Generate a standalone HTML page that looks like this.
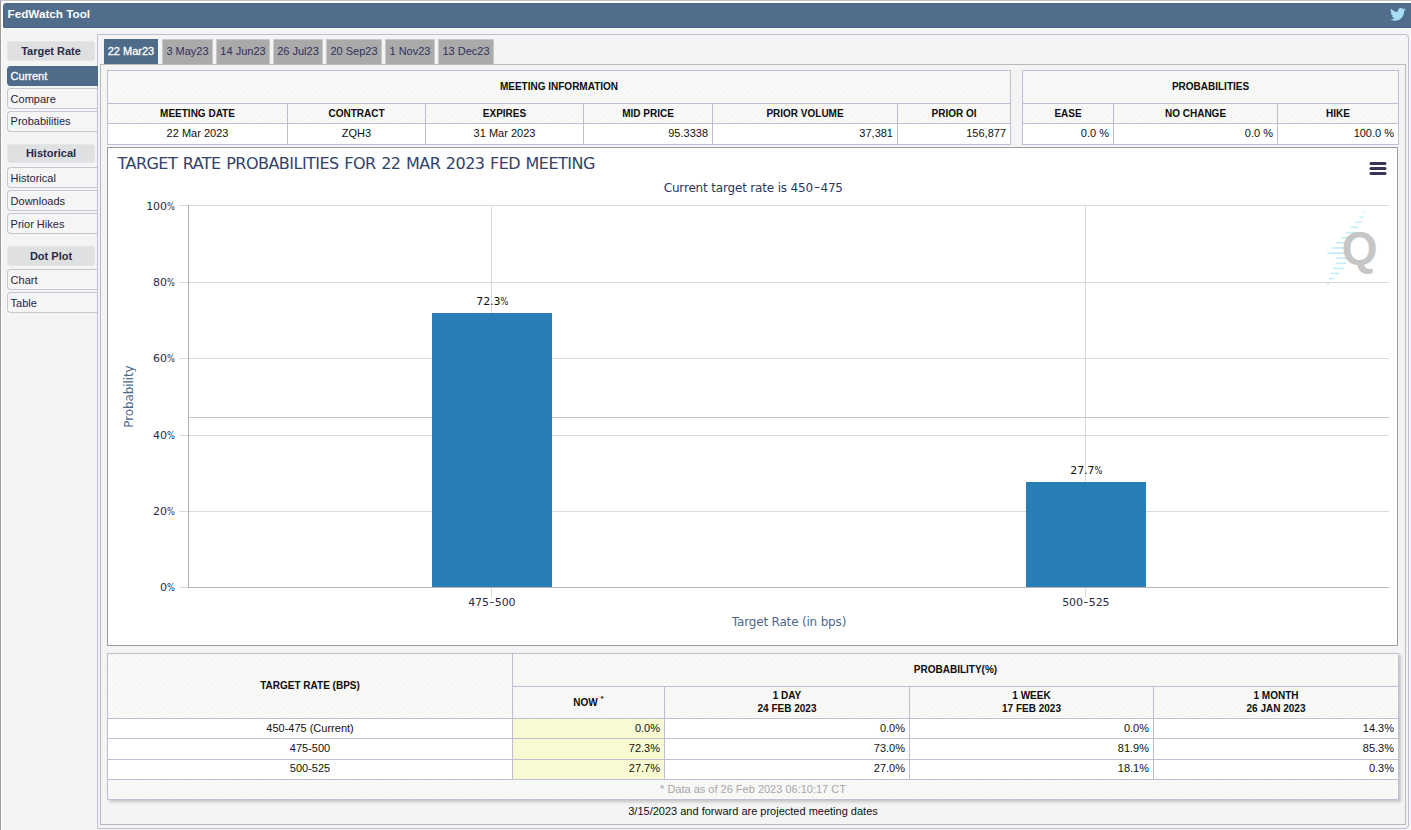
<!DOCTYPE html>
<html lang="en">
<head>
<meta charset="utf-8">
<title>FedWatch Tool</title>
<style>
*{box-sizing:border-box;margin:0;padding:0}
html,body{width:1411px;height:830px;overflow:hidden;background:#f4f4f4;font-family:"Liberation Sans",Arial,sans-serif;color:#15152a}
#frame{position:absolute;left:0;top:0;width:1420px;height:840px;border-left:1px solid #9a9a9a;border-top:1px solid #c4c4c4;background:#f4f4f4}
#topwhite{position:absolute;left:1px;top:1px;width:1410px;height:28px;background:#fff}
#leftwhite{position:absolute;left:1px;top:1px;width:1.3px;height:830px;background:#fdfdfd}
#hdr{position:absolute;left:3px;top:3px;width:1412px;height:25px;background:#506d8c;border:1px solid #48668a;border-radius:3px 0 0 1px;color:#fff;font-weight:bold;font-size:11.7px;line-height:25px}
#hdr span{position:absolute;left:3.6px;top:-3.5px}
.pill{position:absolute;left:7px;width:88px;height:20px;background:#dfe0e2;border:1px solid #e5e6e7;border-radius:3px;font-weight:bold;font-size:11px;line-height:18px;text-align:center;color:#2a2a48}
.item{position:absolute;left:7px;width:91px;height:21px;border:1px solid #c6c7d2;border-right:none;border-radius:4px 0 0 4px;font-size:11px;line-height:20px;padding-left:2.6px;color:#24243e;background:#f5f5f5}
.item.act{z-index:3;-webkit-text-stroke:0.3px #fff;background:#4f6b8a;border-color:#4f6b8a;color:#fff;height:20px;line-height:19px}
#outer{position:absolute;left:97px;top:34px;width:1312px;height:795px;border:1px solid #bcc0d2;border-radius:0 4px 4px 0;background:#f4f4f4}
#inner{position:absolute;left:100px;top:64px;width:1306px;height:761px;border:1px solid #b9b9bb;background:#f4f4f4}
.tab{position:absolute;top:39px;height:25px;font-size:11px;line-height:22px;text-align:center;background:#aaaaaa;border:1px solid #c9c9c9;border-bottom:none;color:#30305a}
.tab.act{background:#4f6b8a;border-color:#4f6b8a;color:#fff;-webkit-text-stroke:0.3px #fff}
.c{position:absolute;border:1px solid #bcc0d2;font-size:11px;text-align:center;white-space:nowrap;overflow:hidden;background:#fff;color:#111}
.c.h{background:radial-gradient(circle at 0.5px 1.5px,#f2f2f1 0.5px,rgba(242,242,241,0) 0.75px) 0 0/3px 6px,radial-gradient(circle at 4.5px 3.5px,#ececec 0.5px,rgba(236,236,236,0) 0.75px) 0 0/6px 6px,radial-gradient(circle at 2.5px 4.5px,#ececec 0.5px,rgba(236,236,236,0) 0.75px) 0 0/6px 6px,radial-gradient(circle at 0.5px 5.5px,#ececec 0.5px,rgba(236,236,236,0) 0.75px) 0 0/6px 6px,#f9f9f8;font-weight:bold;font-size:10px;color:#0d0d0d}
.c.r{text-align:right;padding-right:4px}
.c.y{background:#fafad2}
#chart{position:absolute;left:107px;top:147px;width:1291px;height:499px;border:1px solid #9c9c9c;background:#fff}
#foot{position:absolute;left:107px;top:805px;width:1292px;text-align:center;font-size:11px;line-height:12px;color:#111}
</style>
</head>
<body>
<div id="frame"></div>
<div id="topwhite"></div>
<div id="leftwhite"></div>
<div id="hdr"><span>FedWatch Tool</span></div>
<svg style="position:absolute;left:1390px;top:8.4px" width="16" height="13.2" viewBox="0 0 24 20" preserveAspectRatio="none"><path fill="#a9dcf6" d="M23.6 2.4c-.9.4-1.8.6-2.8.8 1-.6 1.800-1.600 2.100-2.700-.9.600-2 1-3.100 1.200C18.900.700 17.700.100 16.300.100c-2.700 0-4.800 2.200-4.800 4.800 0 .400 0 .800.100 1.100C7.600 5.800 4.100 3.900 1.700 1 1.300 1.700 1 2.600 1 3.500c0 1.700.9 3.200 2.200 4-.8 0-1.500-.2-2.200-.6v.1c0 2.300 1.700 4.300 3.900 4.700-.4.100-.8.200-1.300.200-.3 0-.6 0-.9-.1.600 1.900 2.400 3.300 4.500 3.400-1.700 1.300-3.700 2.100-6 2.100-.4 0-.8 0-1.200-.1 2.100 1.400 4.700 2.200 7.400 2.200 8.900 0 13.700-7.400 13.700-13.700v-.6c.9-.7 1.700-1.500 2.400-2.500z"/></svg>
<div class="pill" style="top:41px">Target Rate</div>
<div class="item act" style="top:66px">Current</div>
<div class="item" style="top:88px">Compare</div>
<div class="item" style="top:111px;line-height:18px">Probabilities</div>
<div class="pill" style="top:144px;height:19px;line-height:16px">Historical</div>
<div class="item" style="top:167px">Historical</div>
<div class="item" style="top:190px">Downloads</div>
<div class="item" style="top:213px">Prior Hikes</div>
<div class="pill" style="top:246px">Dot Plot</div>
<div class="item" style="top:269px">Chart</div>
<div class="item" style="top:292px">Table</div>
<div id="outer"></div>
<div class="tab act" style="left:104px;width:54px">22 Mar23</div>
<div class="tab" style="left:162px;width:51px">3 May23</div>
<div class="tab" style="left:216px;width:54px">14 Jun23</div>
<div class="tab" style="left:273px;width:50px">26 Jul23</div>
<div class="tab" style="left:326px;width:56px">20 Sep23</div>
<div class="tab" style="left:385px;width:50px">1 Nov23</div>
<div class="tab" style="left:438px;width:56px">13 Dec23</div>
<div id="inner"></div>
<div class="c h" style="left:107px;top:70px;width:904px;height:34px;line-height:32px;">MEETING INFORMATION</div>
<div class="c h" style="left:107px;top:103px;width:181px;height:21px;line-height:19px;">MEETING DATE</div>
<div class="c " style="left:107px;top:123px;width:181px;height:22px;line-height:18px;">22 Mar 2023</div>
<div class="c h" style="left:287px;top:103px;width:139px;height:21px;line-height:19px;">CONTRACT</div>
<div class="c " style="left:287px;top:123px;width:139px;height:22px;line-height:18px;">ZQH3</div>
<div class="c h" style="left:425px;top:103px;width:159px;height:21px;line-height:19px;">EXPIRES</div>
<div class="c " style="left:425px;top:123px;width:159px;height:22px;line-height:18px;">31 Mar 2023</div>
<div class="c h" style="left:583px;top:103px;width:130px;height:21px;line-height:19px;">MID PRICE</div>
<div class="c r" style="left:583px;top:123px;width:130px;height:22px;line-height:18px;">95.3338</div>
<div class="c h" style="left:712px;top:103px;width:186px;height:21px;line-height:19px;">PRIOR VOLUME</div>
<div class="c r" style="left:712px;top:123px;width:186px;height:22px;line-height:18px;">37,381</div>
<div class="c h" style="left:897px;top:103px;width:114px;height:21px;line-height:19px;">PRIOR OI</div>
<div class="c r" style="left:897px;top:123px;width:114px;height:22px;line-height:18px;">156,877</div>
<div class="c h" style="left:1022px;top:70px;width:377px;height:34px;line-height:32px;">PROBABILITIES</div>
<div class="c h" style="left:1022px;top:103px;width:92px;height:21px;line-height:19px;">EASE</div>
<div class="c r" style="left:1022px;top:123px;width:92px;height:22px;line-height:18px;">0.0 %</div>
<div class="c h" style="left:1113px;top:103px;width:165px;height:21px;line-height:19px;">NO CHANGE</div>
<div class="c r" style="left:1113px;top:123px;width:165px;height:22px;line-height:18px;">0.0 %</div>
<div class="c h" style="left:1277px;top:103px;width:122px;height:21px;line-height:19px;">HIKE</div>
<div class="c r" style="left:1277px;top:123px;width:122px;height:22px;line-height:18px;">100.0 %</div>
<div id="chart"><svg width="1289" height="496" viewBox="0 0 1289 496" style="display:block;position:absolute;left:0;top:0">
<line x1="71" x2="1281" y1="57.5" y2="57.5" stroke="#dadada" stroke-width="1"/>
<line x1="71" x2="1281" y1="134.5" y2="134.5" stroke="#dadada" stroke-width="1"/>
<line x1="71" x2="1281" y1="210.5" y2="210.5" stroke="#dadada" stroke-width="1"/>
<line x1="71" x2="1281" y1="287.5" y2="287.5" stroke="#dadada" stroke-width="1"/>
<line x1="71" x2="1281" y1="363.5" y2="363.5" stroke="#dadada" stroke-width="1"/>
<line x1="71" x2="1281" y1="439.5" y2="439.5" stroke="#dadada" stroke-width="1"/>
<line x1="383.5" x2="383.5" y1="57" y2="449" stroke="#dadada" stroke-width="1"/>
<line x1="977.5" x2="977.5" y1="57" y2="449" stroke="#dadada" stroke-width="1"/>
<line x1="81" x2="1281" y1="269.5" y2="269.5" stroke="#c4c4c4" stroke-width="1"/>
<rect x="324" y="165" width="120" height="274" fill="#297eb8"/>
<rect x="918" y="334" width="120" height="105" fill="#297eb8"/>
<line x1="80" x2="1281" y1="439.5" y2="439.5" stroke="#b4b4b4" stroke-width="1"/>
<line x1="80.5" x2="80.5" y1="57" y2="440" stroke="#b0b0b0" stroke-width="1"/>
<text x="9.5" y="20.7" font-family="'DejaVu Sans','Liberation Sans',sans-serif" font-size="16" letter-spacing="-0.53" word-spacing="1" fill="#32426a">TARGET RATE PROBABILITIES FOR 22 MAR 2023 FED MEETING</text>
<text x="555.7" y="43.8" font-family="'DejaVu Sans','Liberation Sans',sans-serif" font-size="12" letter-spacing="-0.17" fill="#2c3760">Current target rate is 450</text>
<text transform="translate(705.9,43.0) scale(1.45,1)" font-family="'DejaVu Sans','Liberation Sans',sans-serif" font-size="12" fill="#2c3760">-</text>
<text x="712.6" y="43.8" font-family="'DejaVu Sans','Liberation Sans',sans-serif" font-size="12" letter-spacing="-0.35" fill="#2c3760">475</text>
<text x="38.2" y="62.0" font-family="'DejaVu Sans','Liberation Sans',sans-serif" font-size="11" letter-spacing="-0.1" fill="#2a2a4a">100</text>
<text transform="translate(58.9,62.0) scale(0.756,1)" font-family="'DejaVu Sans','Liberation Sans',sans-serif" font-size="11" fill="#2a2a4a">%</text>
<text x="45.1" y="138.2" font-family="'DejaVu Sans','Liberation Sans',sans-serif" font-size="11" letter-spacing="-0.1" fill="#2a2a4a">80</text>
<text transform="translate(58.9,138.2) scale(0.756,1)" font-family="'DejaVu Sans','Liberation Sans',sans-serif" font-size="11" fill="#2a2a4a">%</text>
<text x="45.1" y="214.4" font-family="'DejaVu Sans','Liberation Sans',sans-serif" font-size="11" letter-spacing="-0.1" fill="#2a2a4a">60</text>
<text transform="translate(58.9,214.4) scale(0.756,1)" font-family="'DejaVu Sans','Liberation Sans',sans-serif" font-size="11" fill="#2a2a4a">%</text>
<text x="45.1" y="290.6" font-family="'DejaVu Sans','Liberation Sans',sans-serif" font-size="11" letter-spacing="-0.1" fill="#2a2a4a">40</text>
<text transform="translate(58.9,290.6) scale(0.756,1)" font-family="'DejaVu Sans','Liberation Sans',sans-serif" font-size="11" fill="#2a2a4a">%</text>
<text x="45.1" y="366.8" font-family="'DejaVu Sans','Liberation Sans',sans-serif" font-size="11" letter-spacing="-0.1" fill="#2a2a4a">20</text>
<text transform="translate(58.9,366.8) scale(0.756,1)" font-family="'DejaVu Sans','Liberation Sans',sans-serif" font-size="11" fill="#2a2a4a">%</text>
<text x="52.0" y="443.0" font-family="'DejaVu Sans','Liberation Sans',sans-serif" font-size="11" letter-spacing="-0.1" fill="#2a2a4a">0</text>
<text transform="translate(58.9,443.0) scale(0.756,1)" font-family="'DejaVu Sans','Liberation Sans',sans-serif" font-size="11" fill="#2a2a4a">%</text>
<text x="368.3" y="157" font-family="'DejaVu Sans','Liberation Sans',sans-serif" font-size="11" letter-spacing="-0.1" fill="#111">72.3</text>
<text transform="translate(392.4,157) scale(0.756,1)" font-family="'DejaVu Sans','Liberation Sans',sans-serif" font-size="11" fill="#111">%</text>
<text x="962.3" y="326" font-family="'DejaVu Sans','Liberation Sans',sans-serif" font-size="11" letter-spacing="-0.1" fill="#111">27.7</text>
<text transform="translate(986.4,326) scale(0.756,1)" font-family="'DejaVu Sans','Liberation Sans',sans-serif" font-size="11" fill="#111">%</text>
<text x="360.15" y="458" font-family="'DejaVu Sans','Liberation Sans',sans-serif" font-size="11" letter-spacing="-0.1" fill="#2a2a4a">475</text>
<text transform="translate(381.3,457.2) scale(1.3,1)" font-family="'DejaVu Sans','Liberation Sans',sans-serif" font-size="11" fill="#2a2a4a">-</text>
<text x="386.75" y="458" font-family="'DejaVu Sans','Liberation Sans',sans-serif" font-size="11" letter-spacing="-0.1" fill="#2a2a4a">500</text>
<text x="954.15" y="458" font-family="'DejaVu Sans','Liberation Sans',sans-serif" font-size="11" letter-spacing="-0.1" fill="#2a2a4a">500</text>
<text transform="translate(975.3,457.2) scale(1.3,1)" font-family="'DejaVu Sans','Liberation Sans',sans-serif" font-size="11" fill="#2a2a4a">-</text>
<text x="980.75" y="458" font-family="'DejaVu Sans','Liberation Sans',sans-serif" font-size="11" letter-spacing="-0.1" fill="#2a2a4a">525</text>
<text x="681" y="477.5" text-anchor="middle" font-family="'DejaVu Sans','Liberation Sans',sans-serif" font-size="12" letter-spacing="-0.18" fill="#4d6a8e">Target Rate (in bps)</text>
<text transform="translate(25.2,248.6) rotate(-90)" text-anchor="middle" font-family="'DejaVu Sans','Liberation Sans',sans-serif" font-size="12" letter-spacing="-0.1" fill="#4d6a8e">Probability</text>
<line x1="1263" x2="1277" y1="15.5" y2="15.5" stroke="#3a3355" stroke-width="3" stroke-linecap="round"/>
<line x1="1263" x2="1277" y1="20.5" y2="20.5" stroke="#3a3355" stroke-width="3" stroke-linecap="round"/>
<line x1="1263" x2="1277" y1="25.5" y2="25.5" stroke="#3a3355" stroke-width="3" stroke-linecap="round"/>
<line x1="1255.4" x2="1257.2" y1="64.4" y2="64.4" stroke="#bdeef7" stroke-width="1.6"/>
<line x1="1251.5" x2="1255.4" y1="69.3" y2="69.3" stroke="#bdeef7" stroke-width="1.6"/>
<line x1="1247.3" x2="1253.3" y1="74.3" y2="74.3" stroke="#bdeef7" stroke-width="1.6"/>
<line x1="1242.8" x2="1250.9" y1="79.4" y2="79.4" stroke="#bdeef7" stroke-width="1.6"/>
<line x1="1238.3" x2="1248.2" y1="84.6" y2="84.6" stroke="#bdeef7" stroke-width="1.6"/>
<line x1="1233.7" x2="1245" y1="89.7" y2="89.7" stroke="#bdeef7" stroke-width="1.6"/>
<line x1="1228.3" x2="1242" y1="94.8" y2="94.8" stroke="#bdeef7" stroke-width="1.6"/>
<line x1="1223.4" x2="1240" y1="100" y2="100" stroke="#bdeef7" stroke-width="1.6"/>
<line x1="1219.3" x2="1238" y1="105.1" y2="105.1" stroke="#bdeef7" stroke-width="1.6"/>
<line x1="1228.3" x2="1239.2" y1="110.1" y2="110.1" stroke="#bdeef7" stroke-width="1.6"/>
<line x1="1227.4" x2="1238.3" y1="115.4" y2="115.4" stroke="#bdeef7" stroke-width="1.6"/>
<line x1="1225.6" x2="1235.5" y1="120.4" y2="120.4" stroke="#bdeef7" stroke-width="1.6"/>
<line x1="1222.9" x2="1231" y1="125.5" y2="125.5" stroke="#bdeef7" stroke-width="1.6"/>
<line x1="1221.1" x2="1226.1" y1="130.6" y2="130.6" stroke="#bdeef7" stroke-width="1.6"/>
<line x1="1218.9" x2="1221.4" y1="135.8" y2="135.8" stroke="#bdeef7" stroke-width="1.6"/>
<text x="0" y="0" text-anchor="middle" font-family="'Liberation Sans',sans-serif" font-weight="bold" font-size="47" fill="#c6c6c6" transform="translate(1251.6,116.3) scale(0.98,1)">Q</text>
</svg></div>
<div style="position:absolute;left:107px;top:653px;width:1292px;height:147px;box-shadow:2px 2px 3px rgba(0,0,0,0.2)"></div>
<div class="c h" style="left:107px;top:653px;width:406px;height:66px;line-height:64px;">TARGET RATE (BPS)</div>
<div class="c h" style="left:512px;top:653px;width:887px;height:34px;line-height:32px;">PROBABILITY(%)</div>
<div class="c h" style="left:512px;top:686px;width:153px;height:33px;line-height:31px;">NOW <sup style="font-size:8px;line-height:0;vertical-align:5px">*</sup></div>
<div class="c h" style="left:664px;top:686px;width:246px;height:33px;line-height:31px;line-height:13px;padding-top:2px">1 DAY<br>24 FEB 2023</div>
<div class="c h" style="left:909px;top:686px;width:245px;height:33px;line-height:31px;line-height:13px;padding-top:2px">1 WEEK<br>17 FEB 2023</div>
<div class="c h" style="left:1153px;top:686px;width:246px;height:33px;line-height:31px;line-height:13px;padding-top:2px">1 MONTH<br>26 JAN 2023</div>
<div class="c " style="left:107px;top:718px;width:406px;height:21px;line-height:19px;">450-475 (Current)</div>
<div class="c r y" style="left:512px;top:718px;width:153px;height:21px;line-height:19px;">0.0%</div>
<div class="c r" style="left:664px;top:718px;width:246px;height:21px;line-height:19px;">0.0%</div>
<div class="c r" style="left:909px;top:718px;width:245px;height:21px;line-height:19px;">0.0%</div>
<div class="c r" style="left:1153px;top:718px;width:246px;height:21px;line-height:19px;">14.3%</div>
<div class="c " style="left:107px;top:738px;width:406px;height:22px;line-height:18px;">475-500</div>
<div class="c r y" style="left:512px;top:738px;width:153px;height:22px;line-height:18px;">72.3%</div>
<div class="c r" style="left:664px;top:738px;width:246px;height:22px;line-height:18px;">73.0%</div>
<div class="c r" style="left:909px;top:738px;width:245px;height:22px;line-height:18px;">81.9%</div>
<div class="c r" style="left:1153px;top:738px;width:246px;height:22px;line-height:18px;">85.3%</div>
<div class="c " style="left:107px;top:759px;width:406px;height:21px;line-height:17px;">500-525</div>
<div class="c r y" style="left:512px;top:759px;width:153px;height:21px;line-height:17px;">27.7%</div>
<div class="c r" style="left:664px;top:759px;width:246px;height:21px;line-height:17px;">27.0%</div>
<div class="c r" style="left:909px;top:759px;width:245px;height:21px;line-height:17px;">18.1%</div>
<div class="c r" style="left:1153px;top:759px;width:246px;height:21px;line-height:17px;">0.3%</div>
<div class="c h" style="left:107px;top:779px;width:1292px;height:21px;line-height:19px;font-weight:normal;font-size:11px;color:#a8a8a8">* Data as of 26 Feb 2023 06:10:17 CT</div>
<div id="foot">3/15/2023 and forward are projected meeting dates</div>
</body>
</html>
